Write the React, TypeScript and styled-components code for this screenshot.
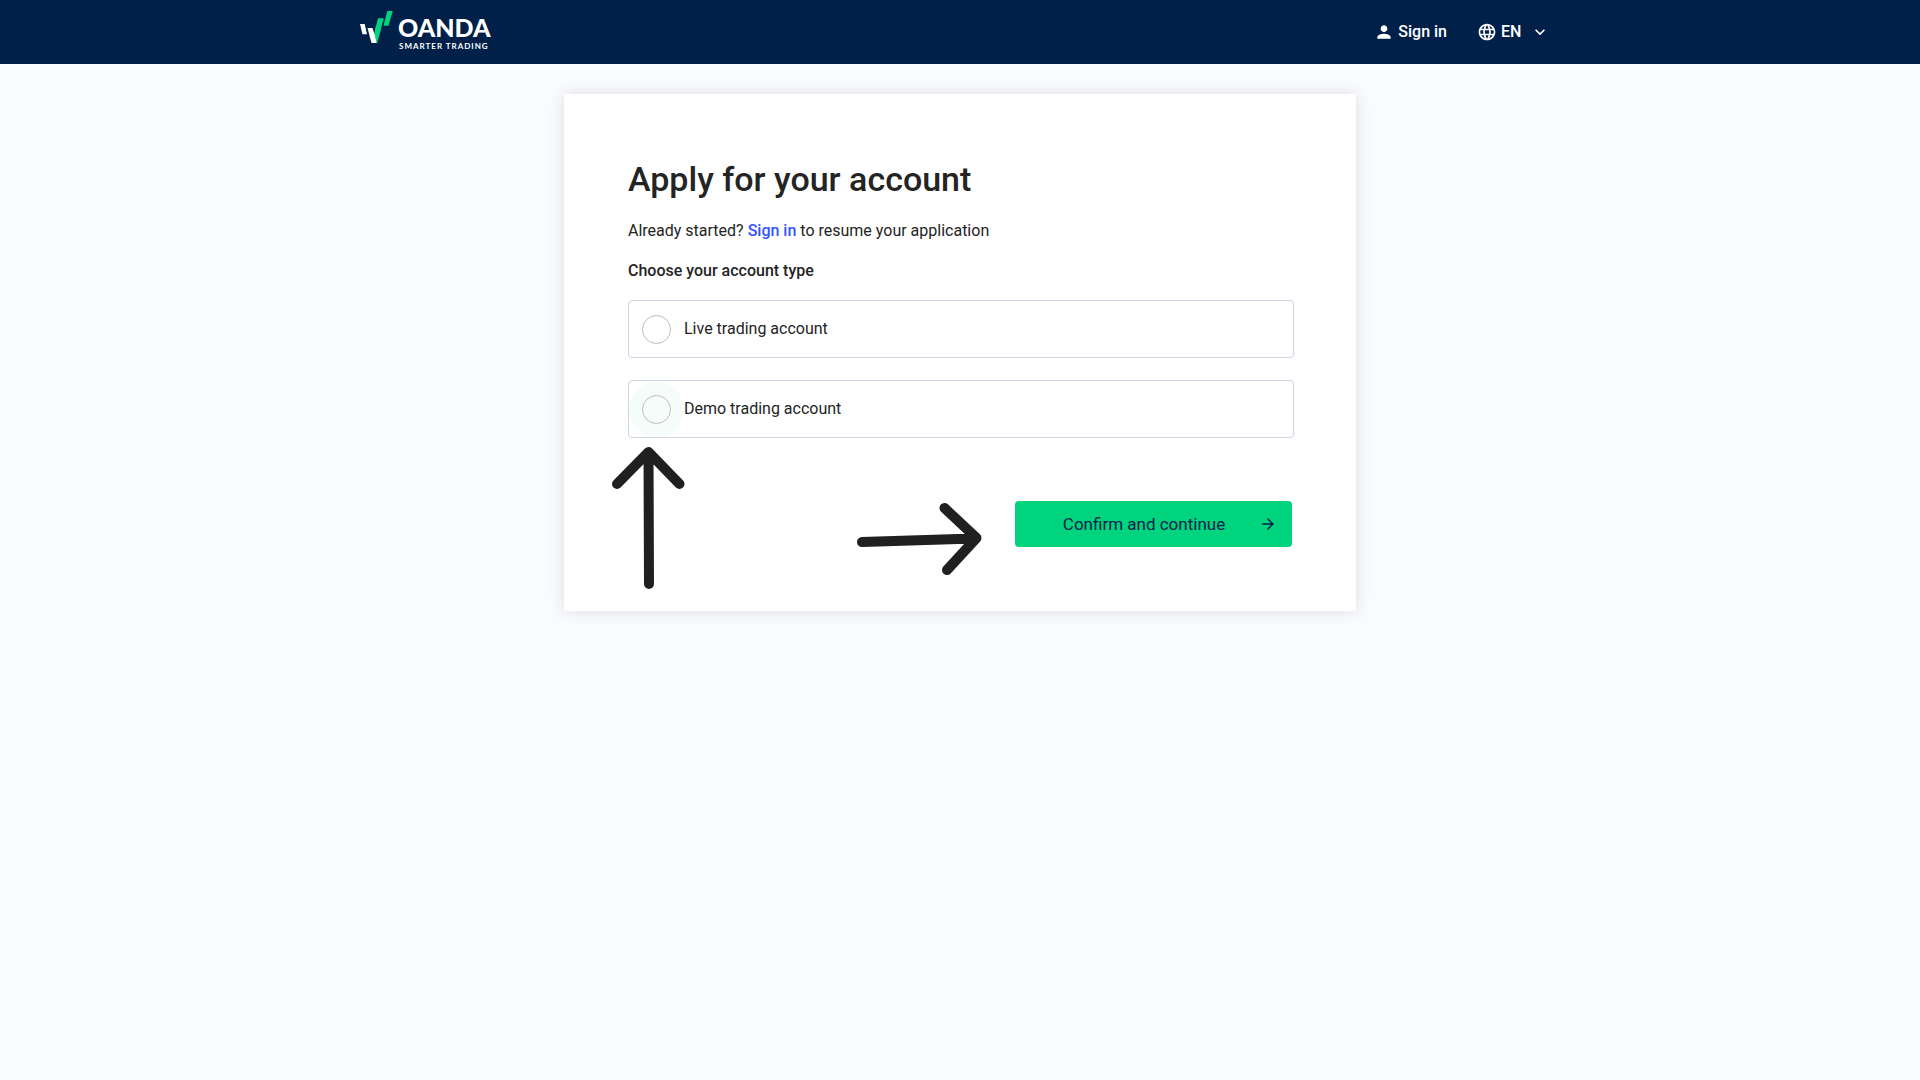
import React, { useState } from "react";
import styled, { createGlobalStyle } from "styled-components";
import { MdArrowForward, MdExpandMore, MdLanguage, MdPerson } from "react-icons/md";

const GlobalStyle = createGlobalStyle`
  *, *::before, *::after { box-sizing: border-box; }
  body {
    margin: 0;
    background: #fafbfd;
    color: #242424;
    font: 400 16px/24px Roboto, sans-serif;
  }
`;

const Header = styled.header`
  background: #00204a;
  color: #ffffff;
`;

const HeaderInner = styled.div`
  display: flex;
  align-items: center;
  justify-content: space-between;
  max-width: 1200px;
  height: 64px;
  margin: 0 auto;
  padding-right: 10px;
`;

const Logo = styled.a`
  display: flex;
  align-items: flex-start;
  gap: 4px;
  color: inherit;
  text-decoration: none;
`;

const LogoMark = styled.svg`
  display: block;
  width: 34px;
  height: 42px;
`;

const LogoText = styled.span`
  display: flex;
  flex-direction: column;
  padding-top: 4px;
`;

const LogoName = styled.span`
  font: 900 25px/24px Lato, sans-serif;
`;

const LogoTagline = styled.span`
  padding-left: 1px;
  font: 700 8px/14px Lato, sans-serif;
  letter-spacing: 1px;
`;

const HeaderNav = styled.nav`
  display: flex;
  align-items: center;
  gap: 30px;
  font-weight: 500;
`;

const HeaderLink = styled.a`
  display: flex;
  align-items: center;
  gap: 4px;
  color: inherit;
  text-decoration: none;
`;

const LanguagePicker = styled.label`
  display: grid;
  grid-template-columns: 20px 25px 20px;
  align-items: center;
  column-gap: 4px;
`;

const LanguageSelect = styled.select`
  grid-column: 2 / 4;
  grid-row: 1;
  appearance: none;
  padding: 0;
  border: 0;
  background: transparent;
  color: #ffffff;
  font: inherit;
`;

const SelectChevron = styled(MdExpandMore)`
  grid-column: 3;
  grid-row: 1;
  pointer-events: none;
`;

const Card = styled.main`
  position: relative;
  max-width: 792px;
  margin: 30px auto;
  padding: 64px;
  background: #ffffff;
  box-shadow: 0 0 16px rgba(0, 0, 30, 0.12);
`;

const Title = styled.h1`
  margin: 0 0 19px;
  font-size: 34px;
  font-weight: 500;
  line-height: 42px;
`;

const Intro = styled.p`
  margin: 0;
`;

const InlineLink = styled.a`
  color: #3553ff;
  font-weight: 500;
  text-decoration: none;
`;

const AccountTypes = styled.fieldset`
  display: flex;
  flex-direction: column;
  gap: 22px;
  margin: 16px -2px 0 0;
  padding: 0;
  border: 0;
`;

const Legend = styled.legend`
  margin-bottom: 17px;
  padding: 0;
  font-weight: 500;
`;

const Option = styled.label`
  display: flex;
  align-items: center;
  gap: 13px;
  height: 58px;
  padding: 0 13px;
  border: 1px solid #cdd4e2;
  border-radius: 4px;
`;

const Radio = styled.input<{ $highlighted?: boolean }>`
  appearance: none;
  width: 29px;
  height: 29px;
  margin: 0;
  border: 1px solid #bdbdbd;
  border-radius: 50%;
  background: ${(p) => (p.$highlighted ? "#f4fdf9" : "transparent")};
  box-shadow: ${(p) => (p.$highlighted ? "0 0 0 13px #f4fdf9" : "none")};

  &:checked {
    border: 8px solid #00d47e;
  }
`;

const Actions = styled.div`
  display: flex;
  justify-content: flex-end;
  margin-top: 63px;
`;

const ConfirmButton = styled.button`
  display: grid;
  grid-template-columns: 1fr 18px;
  align-items: center;
  width: 277px;
  height: 46px;
  padding: 0 15px 0 14px;
  border: 0;
  border-radius: 4px;
  background: #00d47e;
  color: #00204a;
  font: inherit;
  font-size: 17px;
`;

const PointerArrow = styled.svg<{ $left: number; $top: number }>`
  position: absolute;
  left: ${(p) => p.$left}px;
  top: ${(p) => p.$top}px;
  fill: none;
  stroke: #202020;
  stroke-width: 10;
  stroke-linecap: round;
  stroke-linejoin: round;
  pointer-events: none;
`;

const accountTypes = [
  { value: "live", label: "Live trading account" },
  { value: "demo", label: "Demo trading account", highlighted: true },
];

export default function App() {
  const [account, setAccount] = useState("");

  return (
    <>
      <GlobalStyle />
      <Header>
        <HeaderInner>
          <Logo href="#">
            <LogoMark viewBox="0 0 34 42" aria-hidden="true">
              <path d="M0 13h4.700l2.300 10.300H2.500z" fill="#fff" />
              <path d="M18 7.300h5.800L17 32h-5z" fill="#00d47e" />
              <path d="M7.500 17h5l2.400 7.500L16.500 32h-5z" fill="#fff" />
              <path d="M14.600 22l2.400 10 4-14-5-4z" fill="#00d47e" />
              <path d="M27.300 0h5.400l-4.200 14.700h-5z" fill="#00d47e" />
            </LogoMark>
            <LogoText>
              <LogoName>OANDA</LogoName>
              <LogoTagline>SMARTER TRADING</LogoTagline>
            </LogoText>
          </Logo>
          <HeaderNav>
            <HeaderLink href="#">
              <MdPerson size={20} />
              Sign in
            </HeaderLink>
            <LanguagePicker>
              <MdLanguage size={20} />
              <LanguageSelect aria-label="Language" defaultValue="EN">
                <option>EN</option>
              </LanguageSelect>
              <SelectChevron size={20} />
            </LanguagePicker>
          </HeaderNav>
        </HeaderInner>
      </Header>
      <Card>
        <Title>Apply for your account</Title>
        <Intro>
          Already started? <InlineLink href="#">Sign in</InlineLink> to resume your application
        </Intro>
        <AccountTypes>
          <Legend>Choose your account type</Legend>
          {accountTypes.map((type) => (
            <Option key={type.value}>
              <Radio
                type="radio"
                name="account"
                value={type.value}
                checked={account === type.value}
                onChange={() => setAccount(type.value)}
                $highlighted={type.highlighted}
              />
              {type.label}
            </Option>
          ))}
        </AccountTypes>
        <Actions>
          <ConfirmButton type="button">
            Confirm and continue
            <MdArrowForward size={18} />
          </ConfirmButton>
        </Actions>
        <PointerArrow $left={44} $top={348} width="80" height="152" aria-hidden="true">
          <path d="M9 42L40.500 10L71.500 42M40.500 12L41 142" />
        </PointerArrow>
        <PointerArrow $left={286} $top={404} width="140" height="84" aria-hidden="true">
          <path d="M94.500 10L126.500 40L97 72M12 44L124 40.500" />
        </PointerArrow>
      </Card>
    </>
  );
}
